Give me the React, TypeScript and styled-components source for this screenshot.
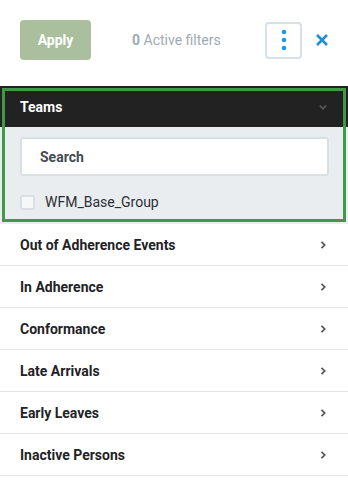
import React from "react";
import styled, { createGlobalStyle } from "styled-components";

const GlobalStyle = createGlobalStyle`
  body {
    margin: 0;
    background: #ffffff;
    font-family: Roboto, "Liberation Sans", Arial, sans-serif;
  }
`;

const Panel = styled.div`
  width: 348px;
  height: 485px;
  background: #fff;
  overflow: hidden;
`;

const Toolbar = styled.div`
  height: 86px;
  display: flex;
  align-items: center;
  padding: 0 20px;
  box-sizing: border-box;
`;

const ApplyButton = styled.button`
  width: 71px;
  height: 40px;
  margin-top: -7px;
  border: none;
  border-radius: 4px;
  background: #a9bf9d;
  color: #fff;
  font-family: inherit;
  font-size: 14px;
  font-weight: 700;
`;

const ActiveCount = styled.div`
  margin-left: 41px;
  margin-top: -7px;
  font-size: 14px;
  color: #9eabb6;
  b {
    font-weight: 700;
  }
`;

const MoreButton = styled.button`
  margin-left: auto;
  margin-top: -6px;
  width: 37px;
  height: 37px;
  border: 2px solid #d6e0e6;
  border-radius: 4px;
  background: #fff;
  display: flex;
  align-items: center;
  justify-content: center;
  padding: 0;
`;

const CloseButton = styled.button`
  margin-left: 13px;
  margin-right: -1px;
  margin-top: -6px;
  border: none;
  background: none;
  padding: 0;
  display: flex;
`;

const Section = styled.section`
  outline: 3px solid #3f9a43;
  outline-offset: -5px;
  background: #e9edf0;
`;

const SectionHeader = styled.div`
  height: 41px;
  background: #222222;
  display: flex;
  align-items: center;
  justify-content: space-between;
  padding: 0 20px;
  color: #fff;
  font-size: 14px;
  font-weight: 700;
`;

const SectionBody = styled.div`
  padding: 10px 19px 14px 20px;
`;

const SearchBox = styled.input`
  display: block;
  width: 100%;
  box-sizing: border-box;
  height: 39px;
  border: 2px solid #d8e0e4;
  border-radius: 3px;
  background: #fff;
  padding: 0 18px;
  font-family: inherit;
  font-size: 14px;
  font-weight: 700;
  color: #444;
  outline: none;
  &::placeholder {
    color: #444b52;
  }
`;

const CheckRow = styled.label`
  display: flex;
  align-items: center;
  gap: 10px;
  margin-top: 18px;
  font-size: 14px;
  color: #2b2f33;
`;

const Box = styled.span`
  width: 15px;
  height: 15px;
  box-sizing: border-box;
  border: 2px solid #d9dfe4;
  background: #f5f7f8;
  border-radius: 2px;
`;

const Row = styled.div`
  height: 41px;
  border-bottom: 1px solid #e4e6e8;
  display: flex;
  align-items: center;
  justify-content: space-between;
  padding: 0 20px;
  font-size: 14px;
  font-weight: 700;
  color: #1f2326;
`;

const Chevron = ({ dir, color }: { dir: "right" | "down"; color: string }) => (
  <svg width="10" height="10" viewBox="0 0 10 10">
    {dir === "right" ? (
      <path d="M3.5 1.8 L6.7 5 L3.5 8.2" fill="none" stroke={color} strokeWidth="1.7" />
    ) : (
      <path d="M1.8 3.5 L5 6.7 L8.2 3.5" fill="none" stroke={color} strokeWidth="1.7" />
    )}
  </svg>
);

const rows = [
  "Out of Adherence Events",
  "In Adherence",
  "Conformance",
  "Late Arrivals",
  "Early Leaves",
  "Inactive Persons",
];

export default function App() {
  return (
    <Panel>
      <GlobalStyle />
      <Toolbar>
        <ApplyButton>Apply</ApplyButton>
        <ActiveCount>
          <b>0</b> Active filters
        </ActiveCount>
        <MoreButton>
          <svg width="6" height="22" viewBox="0 0 6 22">
            <circle cx="3" cy="3" r="2.3" fill="#1a9be0" />
            <circle cx="3" cy="11" r="2.3" fill="#1a9be0" />
            <circle cx="3" cy="19" r="2.3" fill="#1a9be0" />
          </svg>
        </MoreButton>
        <CloseButton>
          <svg width="14" height="14" viewBox="0 0 14 14">
            <path d="M2 2 L12 12 M12 2 L2 12" stroke="#1e8fd2" strokeWidth="2.6" />
          </svg>
        </CloseButton>
      </Toolbar>
      <Section>
        <SectionHeader>
          Teams
          <Chevron dir="down" color="#5a5a5a" />
        </SectionHeader>
        <SectionBody>
          <SearchBox placeholder="Search" />
          <CheckRow>
            <Box />
            WFM_Base_Group
          </CheckRow>
        </SectionBody>
      </Section>
      {rows.map((r) => (
        <Row key={r}>
          {r}
          <Chevron dir="right" color="#555" />
        </Row>
      ))}
    </Panel>
  );
}
